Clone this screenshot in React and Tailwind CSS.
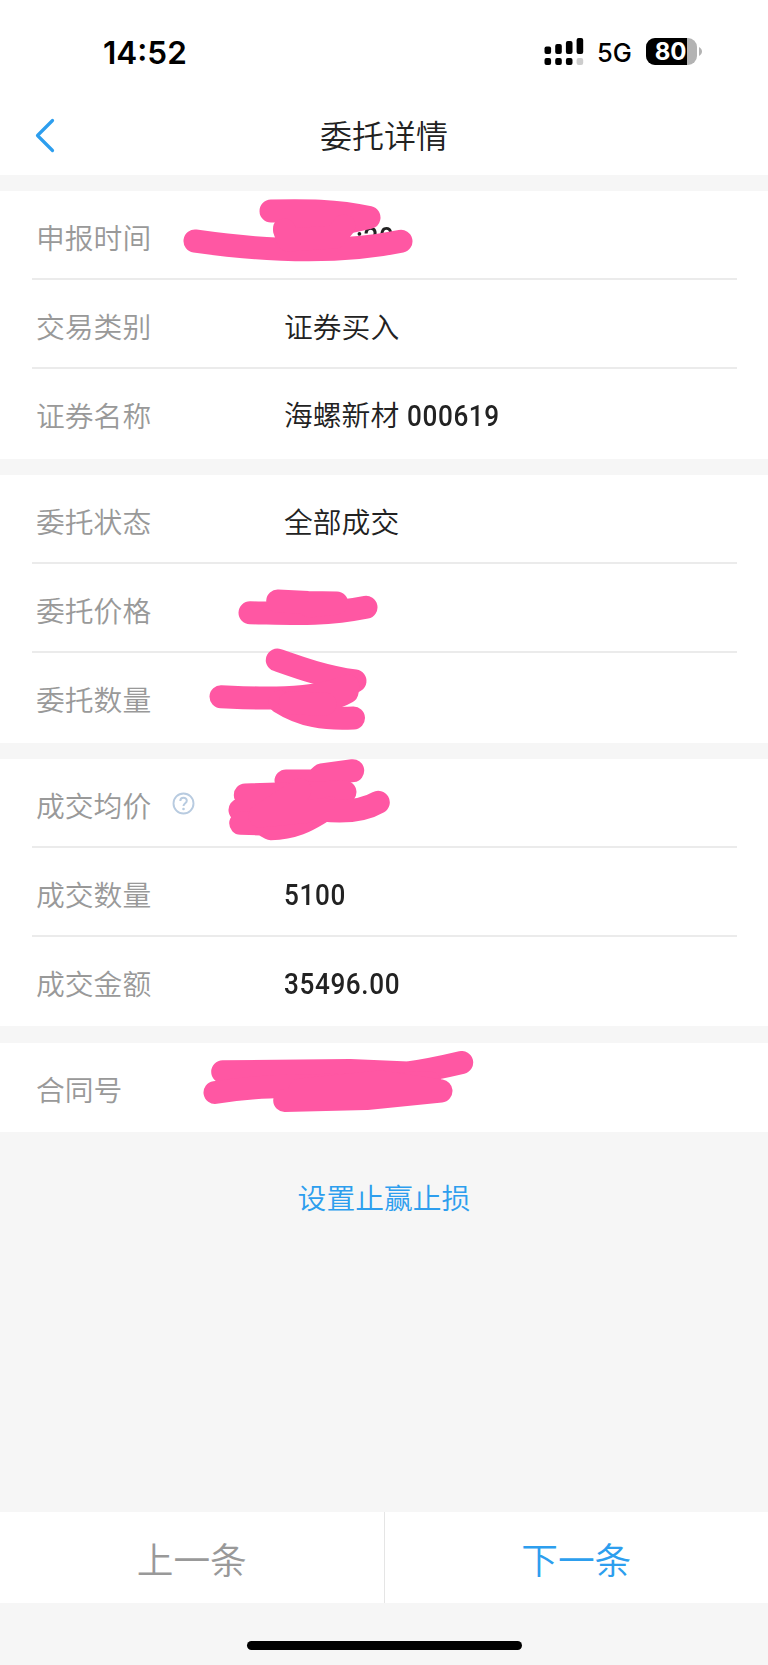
const CJK = "font-['Noto_Sans_CJK_SC',sans-serif]";

function Num({ children }) {
  return (
    <span className="inline-block origin-left scale-x-[0.9] font-['Roboto',sans-serif] text-[29px] font-medium tracking-[0.7px]">
      {children}
    </span>
  );
}

function StatusBar() {
  return (
    <div className="flex h-[98px] items-start pl-[103px] font-['Inter',sans-serif] text-black">
      <span className="mt-[33px] w-[441px] text-[31.5px] leading-[40px] font-semibold">14:52</span>
      <svg className="mt-[38px]" width="40" height="28" viewBox="0 0 40 28">
        <rect x="0.5" y="8.5" width="6.6" height="7.5" rx="2" />
        <rect x="11.2" y="6" width="6.6" height="10" rx="2" />
        <rect x="21.9" y="3" width="6.6" height="13" rx="2" />
        <rect x="32.6" y="0" width="6.6" height="16" rx="2" />
        <rect x="0.5" y="20" width="6.6" height="7" rx="2" />
        <rect x="11.2" y="20" width="6.6" height="7" rx="2" />
        <rect x="21.9" y="20" width="6.6" height="7" rx="2" />
        <rect x="32.6" y="20" width="6.6" height="7" rx="2" fill="#cccccc" />
      </svg>
      <span className="mt-[38px] ml-[13px] w-[48.5px] text-[25.5px] leading-[30px] font-medium">5G</span>
      <div className="mt-[38px] flex items-center">
        <div className="flex h-[27px] w-[51px] overflow-hidden rounded-[9px] bg-[#b3b3b3]">
          <div className="flex w-[41px] items-center justify-end bg-black text-[24px] leading-[28px] font-bold text-white">
            80
          </div>
        </div>
        <svg className="ml-[2px]" width="4" height="9" viewBox="0 0 4 9">
          <path d="M0 0C4 2 4 7 0 9Z" fill="#b3b3b3" />
        </svg>
      </div>
    </div>
  );
}

function Row({ label, children, last, help }) {
  return (
    <div className={last ? "flex h-[89px] items-center pt-[3px]" : "flex h-[89px] items-center border-b-2 border-[#ebebeb] pt-[4px]"}>
      <div className="flex w-[252px] items-center pl-[4px] text-[#999999]">
        <span>{label}</span>
        {help && (
          <svg className="-mt-[2px] ml-[21px]" width="23" height="23" viewBox="0 0 23 23" fill="none" stroke="#b8cbe0">
            <circle cx="11.5" cy="11.5" r="10" strokeWidth="1.9" />
            <path d="M8.3 9C8.3 4.6 14.8 4.7 14.8 8.7C14.8 11.2 11.5 11.2 11.5 14" strokeWidth="2" />
            <circle cx="11.5" cy="17" r="1.3" fill="#b8cbe0" stroke="none" />
          </svg>
        )}
      </div>
      <div className="whitespace-pre text-[#222222]">{children}</div>
    </div>
  );
}

function Section({ viewBox, strokes, className, children }) {
  return (
    <section className={className}>
      {children}
      <svg
        className="pointer-events-none absolute top-0 left-0 w-[768px] overflow-visible blur-[0.6px]"
        viewBox={viewBox}
        fill="none"
        stroke="#ff57a3"
        strokeWidth="23"
        strokeLinecap="round"
        strokeLinejoin="round"
      >
        {strokes.map((d) => (
          <path key={d} d={d} />
        ))}
      </svg>
    </section>
  );
}

const TIME_MARKS = [
  "M271 211C305 210.5 335 210 369 217.5L344 223Q310 227 284.5 229L300 220L340 222",
  "M195 241C265 251 340 254 401 241.3",
  "M284.5 230L288 240L335 237L344 226",
];
const ORDER_MARKS = [
  "M250 612.7C290 613.5 322 616 366 607.3",
  "M277.7 601L308 602.5L336.7 603L310 606",
  "M277.3 660C300 668 325 677 355 681L340 690",
  "M221 696.7C250 698 310 702 348 686L347 692C335 699 320 702 290 701",
  "M280 702C302 716 325 719.5 353.5 718",
  "M290 703L325 704",
];
const DEAL_MARKS = [
  "M352.7 770.7L321.7 775L315 781L286 781L330 785",
  "M245.3 795L345 792L240 810L330 800",
  "M240.7 823.3L262 824L270.7 828.7C305 828 318 811 330 808",
  "M378.3 802.3C360 813 335 811.5 322 810L260 816L300 790",
];
const CONTRACT_MARKS = [
  "M222.7 1071.8L350 1070.5L408 1073Q430 1070 461.7 1062.5",
  "M215 1092.5C250 1087 270 1087 300 1086L430 1083",
  "M284.7 1100.5L366.7 1098.5L441 1091L380 1082L300 1090",
];

export default function App() {
  return (
    <div className={`flex h-[1665px] w-[768px] flex-col overflow-hidden bg-[#f6f6f6] text-[28.8px] leading-[40px] font-[350] ${CJK}`}>
      <header className="h-[175px] bg-white">
        <StatusBar />
        <div className="grid h-[77px] grid-cols-[1fr_auto_1fr] items-start pl-[35px] pr-[35px]">
          <svg className="mt-[20px]" width="20" height="35" viewBox="0 0 20 35" fill="none" stroke="#2d9eee" strokeWidth="3.2" strokeLinecap="round" strokeLinejoin="round">
            <path d="M17.5 2.5L2.5 17.5L17.5 32.5" />
          </svg>
          <h1 className="mt-[13px] text-[32px] leading-[46px] text-[#222222]">委托详情</h1>
        </div>
      </header>

      <Section className="relative mt-[16px] h-[268px] bg-white pr-[31px] pl-[32px]" viewBox="0 191 768 268" strokes={TIME_MARKS}>
        <Row label="申报时间">
          <span className="pl-[72px]"><Num>:20</Num></span>
        </Row>
        <Row label="交易类别">证券买入</Row>
        <Row label="证券名称" last>海螺新材 <span className="pl-[1.5px]"><Num>000619</Num></span></Row>
      </Section>

      <Section className="relative mt-[16px] h-[268px] bg-white pr-[31px] pl-[32px]" viewBox="0 475 768 268" strokes={ORDER_MARKS}>
        <Row label="委托状态">全部成交</Row>
        <Row label="委托价格" />
        <Row label="委托数量" last />
      </Section>

      <Section className="relative mt-[16px] h-[267px] bg-white pr-[31px] pl-[32px]" viewBox="0 759 768 267" strokes={DEAL_MARKS}>
        <Row label="成交均价" help />
        <Row label="成交数量"><Num>5100</Num></Row>
        <Row label="成交金额" last><Num>35496.00</Num></Row>
      </Section>

      <Section className="relative mt-[17px] h-[89px] bg-white pr-[31px] pl-[32px]" viewBox="0 1043 768 89" strokes={CONTRACT_MARKS}>
        <Row label="合同号" last />
      </Section>

      <button className="mt-[44px] self-center leading-[42px] text-[#2d9eee]">设置止赢止损</button>

      <footer className="mt-auto">
        <nav className="flex h-[91px] bg-white text-[36.7px]">
          <button className="flex-1 border-r border-[#e5e5e5] pt-[1px] text-[#999999]">上一条</button>
          <button className="flex-1 pt-[1px] text-[#2d9eee]">下一条</button>
        </nav>
        <div className="flex h-[62px] justify-center pt-[38px]">
          <div className="h-[9px] w-[275px] rounded-full bg-black" />
        </div>
      </footer>
    </div>
  );
}
